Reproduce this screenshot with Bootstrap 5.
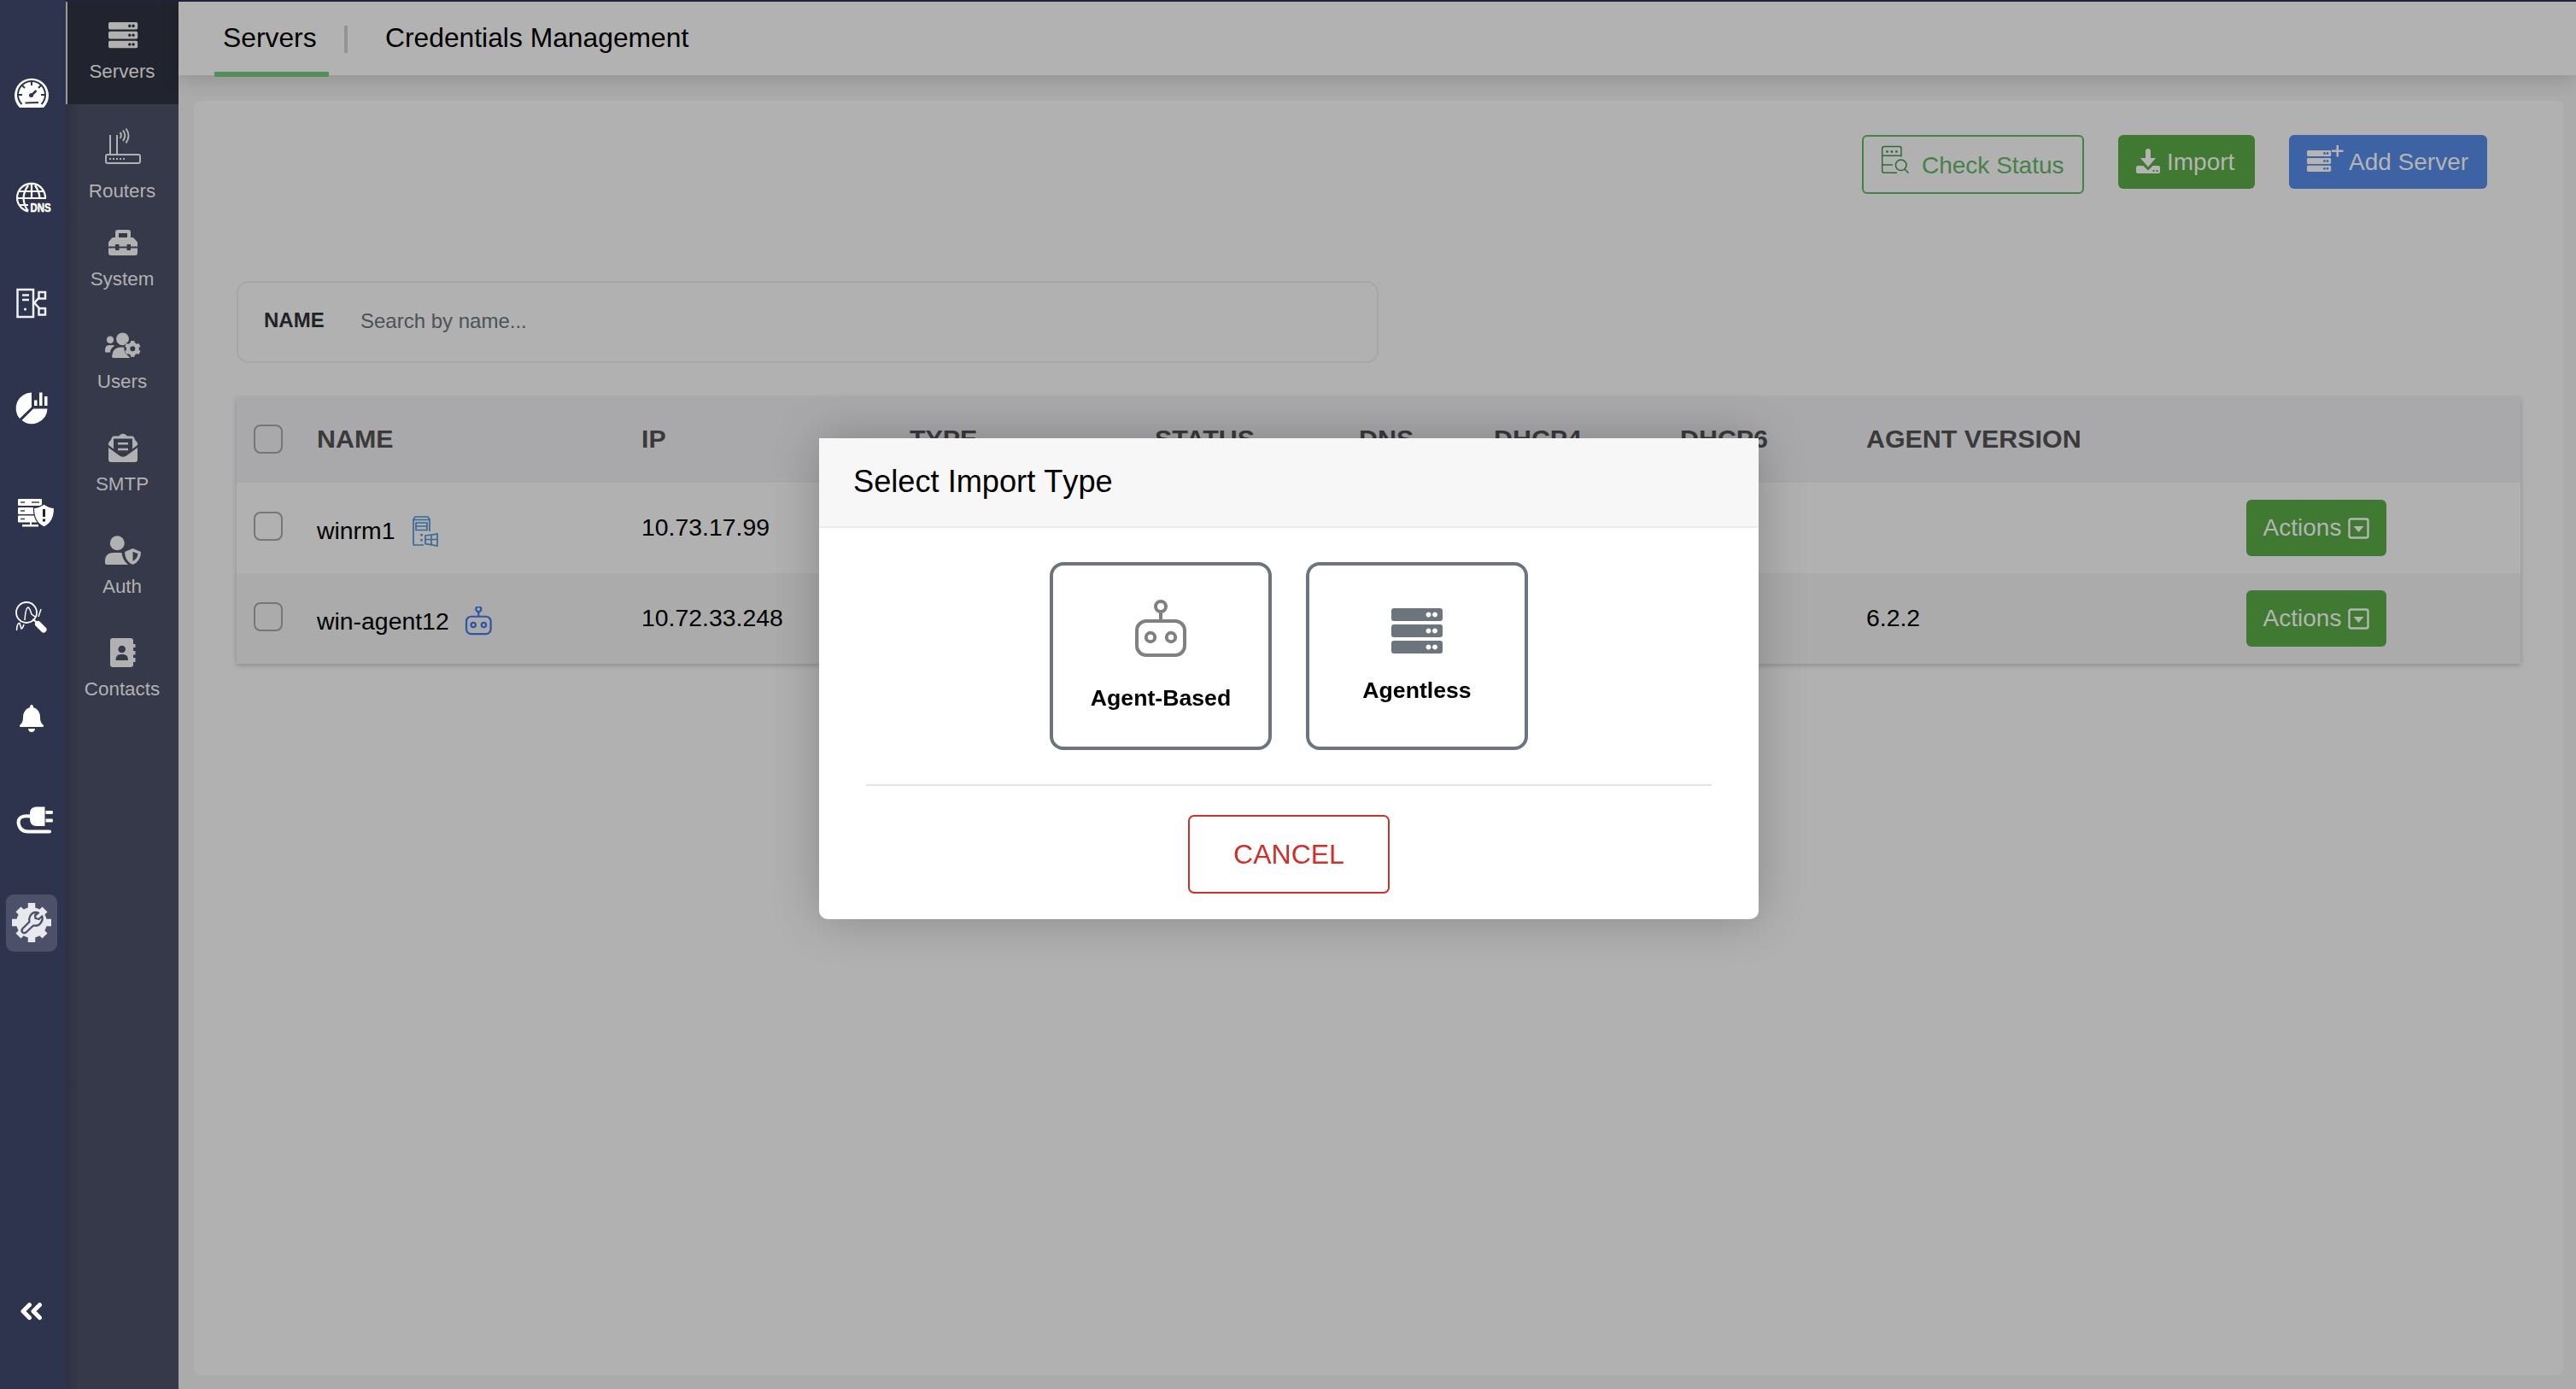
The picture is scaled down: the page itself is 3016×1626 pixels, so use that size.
<!DOCTYPE html>
<html lang="en">
<head>
<meta charset="utf-8">
<title>Servers</title>
<link rel="stylesheet" href="https://cdn.jsdelivr.net/npm/bootstrap@5.3.0/dist/css/bootstrap.min.css">
<script src="https://cdn.jsdelivr.net/npm/bootstrap@5.3.0/dist/js/bootstrap.bundle.min.js"></script>
<style>
html,body{height:100%}
body{font-family:"Liberation Sans",Arial,sans-serif;font-size:28px;line-height:1.2;color:#000;background:#ababab;overflow:hidden}
svg{display:block;flex:none}
.rail{width:77px;background:#2e344e;padding:47px 0 0}
.rail .bottom{margin-top:auto;margin-bottom:71px}
.submenu{width:132px;background:linear-gradient(90deg,#2e303f 0,#36394a 15px);border-top:2px solid #20233a;font-size:22.4px;line-height:26px;color:#b1b1b1}
.entry{height:120px;padding-top:22px;gap:13px;color:inherit;text-decoration:none}
.entry.current{background:#21232e;border-left:2px solid #999;}
.entry.current svg,.entry.current span{margin-left:-2px}
.entry.routers{height:123px;padding-top:26px;gap:17px}
.topbar{height:88px;background:#b2b2b2;border-top:2px solid #20233a;box-shadow:0 4px 22px rgba(0,0,0,.16);font-size:31.8px;padding-left:42px}
.topbar a{color:#000;text-decoration:none;line-height:84px}
.topbar .picked{width:134px;height:88px;border-bottom:6px solid #528f5b;padding-left:10px}
.rule{width:4px;height:32px;background:#949494;margin:28px 44px 0 18px}
.panel{margin:30px 15px 16px 18px;background:#b1b1b1;border-radius:8px;padding:40px 50px 0}
.tools{height:171px;padding-right:39px;gap:40px}
.tools .btn,.acts{font-size:28px;line-height:32px;border-radius:6px;padding:0;color:#b4b4b4;border:0}
.tools .btn{height:63px}
.tools .btn span{padding-top:16px}
.tools .check{width:260px;height:69px;border:2px solid #468147;color:#468147}
.tools .check span{padding-top:18px}
.tools .green{width:160px}
.tools .blue{width:232px}
.green{background:#407a32}
.blue{background:#3d63a5}
.finder{width:1337px;height:96px;border:2px solid #a7a7a7;border-radius:14px;padding-left:30px;padding-bottom:2px;font-size:24px}
.finder b{color:#1f2427;width:113px;margin-top:-2px}
.finder span{color:#4c5256}
.grid-table{margin:40px 0 0;width:2674px;table-layout:fixed;font-size:28.4px;box-shadow:0 2px 6px rgba(0,0,0,.2);--bs-table-bg:#b1b1b1;--bs-table-color:#000}
.grid-table>:not(caption)>*>*{padding:0 0 2px;border:0;vertical-align:middle;height:106px;color:#000}
.grid-table>tbody>tr>td:last-child{padding:0}
.grid-table>thead>tr>th{height:100px;background:#a9a9ab;color:#3a3a3a;font-size:30.4px;padding-bottom:3px}
.grid-table>tbody>tr.alt>td{background:#ababab}
.tick{display:block;width:34px;height:34px;border:2px solid #767676;border-radius:8px;margin-left:20px}
tbody .tick{margin-top:-3px}
.acts{width:164px;height:66px;background:#407a32;gap:8px}
.nm{padding-top:9px}
.nm .bot{margin-left:18px}
.dlg{max-width:1100px;width:1100px;margin:513px 0 0 959px}
.dlg .modal-content{height:563px;border:0;border-radius:0 0 10px 10px;box-shadow:0 0 56px rgba(0,0,0,.23)}
.dlg .modal-header{height:105px;background:#f7f7f7;border-bottom:2px solid #ebebeb;border-radius:0;padding:0 0 2px 40px;font-size:36.2px;font-kerning:none}
.dlg .modal-body{padding:40px 55px 0}
.kinds{gap:40px;height:262px;border-bottom:2px solid #e3e3e3}
.kind{width:260px;height:220px;border:4px solid #6c757d;border-radius:16px;background:#fff;font-weight:700;font-size:26.667px;line-height:30px;color:#000;padding:40px 0 0;gap:33px}
.kind.less{padding-top:50px;gap:28px}
.cancel{width:236px;height:92px;margin-top:34px;border:2px solid #d0302a;border-radius:7px;color:#d0302a;font-size:32px;padding:0}
</style>
</head>
<body>
<svg width="0" height="0" class="position-absolute">
 <defs>
  <g id="robot" fill="none"><circle cx="30" cy="8" r="6"/><path d="M30 14V24"/><rect x="2" y="25" width="56" height="40" rx="11"/><circle cx="18" cy="44" r="5.2"/><circle cx="42" cy="44" r="5.2"/></g>
  <g id="rack"><path fill-rule="evenodd" d="M3 0H57Q60 0 60 3V12Q60 15 57 15H3Q0 15 0 12V3Q0 0 3 0ZM43.500 4.500a3 3 0 1 0 .01 0ZM51 4.500a3 3 0 1 0 .01 0ZM3 19H57Q60 19 60 22V31Q60 34 57 34H3Q0 34 0 31V22Q0 19 3 19ZM43.500 23.500a3 3 0 1 0 .01 0ZM51 23.500a3 3 0 1 0 .01 0ZM3 38H57Q60 38 60 41V50Q60 53 57 53H3Q0 53 0 50V41Q0 38 3 38ZM43.500 42.500a3 3 0 1 0 .01 0ZM51 42.500a3 3 0 1 0 .01 0Z"/></g>
 </defs>
</svg>

<div class="d-flex vh-100">
 <nav class="rail d-flex flex-column">
  <svg width="77" height="123" viewBox="0 47 77 123"><path fill="#fff" d="M23 126A20 20 0 1 1 51 126Z"/><g stroke="#2e344e" fill="none"><path stroke-width="2" d="M25.500 122A16 16 0 1 1 48.500 122"/><path stroke-width="2" d="M37 95.500V100M21.500 111H26M48 111H52.500M26 100L29 103M48 100L45 103M29.500 120.500L45 120"/><path stroke-width="2.500" d="M37 111.500L42.500 106"/></g><circle cx="36.500" cy="111.500" r="2.500" fill="#2e344e"/></svg>
  <svg width="77" height="123" viewBox="0 170 77 123"><g fill="none" stroke="#fff" stroke-width="2.200"><path d="M33 247.500A16.500 16.500 0 1 1 53 232M37 216V232M22 224H52M20.500 232H54M23 240H33M33 217Q28 224 27.500 232Q28 241 33 247M41 217Q46 224 46.500 232"/></g><text x="35.500" y="247.500" font-size="15" font-weight="700" fill="#fff" stroke="#fff" stroke-width=".6" textLength="24" lengthAdjust="spacingAndGlyphs">DNS</text></svg>
  <svg width="77" height="123" viewBox="0 293 77 123"><g fill="none" stroke="#f0f0f4" stroke-width="2.500"><rect x="20.500" y="339" width="18.500" height="32"/><path d="M26 345.500H34M26 351H34M39 356L46 348M39 353L46 361"/><rect x="45.500" y="342" width="7.500" height="7.500"/><rect x="45.500" y="361" width="7.500" height="7.500"/></g><circle cx="29.500" cy="362" r="1.500" fill="#fff"/></svg>
  <svg width="77" height="123" viewBox="0 416 77 123"><g fill="#fff"><path d="M37 459.500V476.500L23 490A18.500 18.500 0 0 1 37 459.500ZM39 478.500H55.500A18.500 18.500 0 0 1 25.500 492ZM40 468.500H43.500V475H40ZM46 459.500H49.500V475H46ZM52 464H55.500V475H52Z"/></g></svg>
  <svg width="77" height="122" viewBox="0 539 77 122"><g fill="#fff"><rect x="21" y="584" width="28" height="8" rx="1"/><rect x="21" y="594" width="28" height="8" rx="1"/><rect x="21" y="603.500" width="28" height="8" rx="1"/><path d="M35 611H37V614H45V616.500H26V614H35Z"/><path stroke="#2e344e" stroke-width="1.200" d="M51.500 590Q57 594 63.500 594.500Q64 611 51.500 617Q39 611 39.500 594.500Q46 594 51.500 590Z"/></g><path stroke="#444" stroke-width="1.500" d="M24 588H29M37 588H46M24 598H29M24 607.500H29"/><path stroke="#222" stroke-width="3" d="M51.500 596V605M51.500 607.500V610.500"/></svg>
  <svg width="77" height="121" viewBox="0 661 77 121"><g fill="none" stroke="#fff"><circle cx="31" cy="717" r="12" stroke-width="1.800"/><path stroke-width="1.500" d="M29 726Q30 711 33 711Q35 712 37 719L41 722M45 722L48 713M19.500 738Q20 729 23 729.500L25 736Q27 735 28 731"/><path stroke-width="2" d="M38.500 724.500L43 729"/><path stroke-width="7" stroke-linecap="round" d="M44.500 730.500L51 737"/></g></svg>
  <svg width="77" height="119" viewBox="0 782 77 119"><path fill="#fff" d="M37 825Q39 825 39 828Q47 830.500 47 840Q47 846 50.500 848.500Q52 851 49.500 851H24.500Q22 851 23.500 848.500Q27 846 27 840Q27 830.500 35 828Q35 825 37 825ZM33 853H41Q40.500 857 37 857Q33.500 857 33 853Z"/></svg>
  <svg width="77" height="119" viewBox="0 901 77 119"><path fill="#fff" d="M42 944.500H52.500V967H42Q35 966 35 959V952Q35 945 42 944.500ZM53.500 949H61Q62 949 62 951T61 953H53.500ZM53.500 958.500H61Q62 958.500 62 960.500T61 962.500H53.500Z"/><path fill="none" stroke="#fff" stroke-width="4" stroke-linecap="round" d="M35 955.500Q21.500 954 21.500 963Q23 973.500 33 973.500H58"/></svg>
  <svg width="77" height="120" viewBox="0 1020 77 120"><rect x="7" y="1047" width="60" height="67" rx="9" fill="#4c5069"/><g fill="#e8e9ed" stroke="#e8e9ed"><circle cx="37" cy="1080" r="17.500"/><path stroke-width="8.500" d="M37 1057V1103M14 1080H60M21.500 1064.500L52.500 1095.500M52.500 1064.500L21.500 1095.500"/></g><path fill="none" stroke="#4c5069" stroke-width="2.300" stroke-linejoin="round" d="M45 1068.500Q38 1066.500 35 1073Q33.500 1076 34.500 1079L26.500 1087Q24.500 1090 26.500 1091.500Q29 1093 31 1091L39 1083.500Q45 1084.500 48 1080Q50.500 1076.500 49.300 1072.500L45.500 1076L41.500 1075L41 1071.500Z"/></svg>
  <svg class="bottom" width="77" height="40" viewBox="0 1515 77 40"><path fill="none" stroke="#fff" stroke-width="5" stroke-linecap="round" stroke-linejoin="round" d="M34.500 1527.500L27 1535L34.500 1542.500M46.500 1527.500L39 1535L46.500 1542.500"/></svg>
 </nav>

 <nav class="submenu d-flex flex-column">
  <a class="entry current d-flex flex-column align-items-center"><svg width="132" height="34" viewBox="77 24 132 34" fill="#b1b1b1"><use href="#rack" transform="translate(127 26) scale(.57)"/></svg><span>Servers</span></a>
  <a class="entry routers d-flex flex-column align-items-center"><svg width="132" height="46" viewBox="77 148 132 46" fill="none" stroke="#b1b1b1"><rect x="124" y="181" width="40" height="10" rx="2" stroke-width="2"/><path stroke-width="2" d="M129 158V181M137 158V181M140.500 155Q143.500 158.500 140.500 162M144 152.500Q148.500 158.500 144 165M147.500 150.500Q153.500 158.500 147.500 167.500"/><path stroke-width="2" stroke-dasharray="2 2" d="M128 186H147"/></svg><span>Routers</span></a>
  <a class="entry d-flex flex-column align-items-center"><svg width="132" height="34" viewBox="77 267 132 34" fill="#b1b1b1"><path fill-rule="evenodd" d="M135 278V272Q135 269 138 269H150Q153 269 153 272V278H156L161 283.500V288.500H153V286H148.500V288.500H139.500V286H135V288.500H127V283.500L131.500 278ZM139 273V278H149V273Z"/><path d="M127 290.500H135V293H139.500V290.500H148.500V293H153V290.500H161V296Q161 299 158 299H130Q127 299 127 296Z"/></svg><span>System</span></a>
  <a class="entry d-flex flex-column align-items-center"><svg width="132" height="34" viewBox="77 387 132 34" fill="#b1b1b1"><circle cx="129" cy="397.700" r="4.200"/><circle cx="143.500" cy="396.800" r="7.400"/><path d="M123 411Q122.500 404 128 404H132.500Q134 404.500 134 405Q129 408 129 412.500H124Q123 412.500 123 411ZM131 417Q132 406.500 141 406.500H145L152 419H133Q131 419 131 417Z"/><g stroke="#36394a" stroke-width="4"><circle cx="155.300" cy="408.300" r="8"/></g><g stroke="#b1b1b1"><circle cx="155.300" cy="408.300" r="5.300" fill="none" stroke-width="4.500"/><path stroke-width="4.500" d="M155.300 399V402.500M155.300 414V417.700M147.200 403.700L150.200 405.400M163.400 403.700L160.400 405.400M147.200 413L150.200 411.300M163.400 413L160.400 411.300"/></g><circle cx="155.300" cy="408.300" r="3" fill="#36394a"/></svg><span>Users</span></a>
  <a class="entry d-flex flex-column align-items-center"><svg width="132" height="34" viewBox="77 507 132 34" fill="#b1b1b1"><path fill-rule="evenodd" d="M139 510.500Q144 505 149 510.500H154Q157.500 510.500 157.500 514L161 518.500V521L155 525.500V513.500H133V525.500L127 521V518.500L130.500 514Q130.500 510.500 134 510.500ZM127 524L140 533.500Q144 536 148 533.500L161 524V538Q161 541 158 541H130Q127 541 127 538ZM138 518H150V520.600H138ZM138 524.700H150V527.300H138Z"/></svg><span>SMTP</span></a>
  <a class="entry d-flex flex-column align-items-center"><svg width="132" height="34" viewBox="77 627 132 34" fill="#b1b1b1"><circle cx="137.300" cy="635.700" r="8.500"/><path d="M123 659Q122 647 133 647H142.500Q143.500 656 150 661H125Q123 661 123 659Z"/><path fill-rule="evenodd" d="M155.500 642L165 646Q165 657 155.500 661Q146 657 146 646ZM155.500 645.800V657Q161 654 161.500 648.200Z"/></svg><span>Auth</span></a>
  <a class="entry d-flex flex-column align-items-center"><svg width="132" height="34" viewBox="77 747 132 34"><path fill="#b1b1b1" d="M132 747H153Q156 747 156 750V754H158.500V758H156V762H158.500V766.500H156V770H158.500V775H156V778Q156 781 153 781H132Q129 781 129 778V750Q129 747 132 747Z"/><g fill="#36394a"><circle cx="142.700" cy="760" r="4.300"/><path d="M135.500 773Q135.500 766 141 766H145Q150 766.500 150 773Z"/></g></svg><span>Contacts</span></a>
 </nav>

 <main class="flex-grow-1 d-flex flex-column">
  <header class="topbar d-flex">
   <a class="picked">Servers</a><div class="rule"></div><a>Credentials Management</a>
  </header>
  <section class="panel flex-grow-1">
   <div class="tools d-flex justify-content-end align-items-start">
    <button class="btn check d-flex"><svg width="68" height="65" viewBox="2182 160 68 65" fill="none" stroke="#2f6b35" stroke-width="1.500"><path d="M2226 183.500V174Q2226 171.500 2224 171.500H2206Q2203.700 171.500 2203.700 174V200Q2203.700 202.300 2206 202.300H2221M2204 182.300H2226M2204 193H2216"/><circle cx="2225.700" cy="193.300" r="6.300"/><path d="M2230 198L2234.500 202.500"/><path stroke-width="2.500" stroke-dasharray="2.500 3" d="M2208.200 177.500H2222"/></svg><span>Check Status</span></button>
    <button class="btn green d-flex"><svg width="57" height="63" viewBox="2480 158 57 63" fill="#b4b4b4"><path fill-rule="evenodd" d="M2512 177Q2512 174 2515 174T2518 177V185H2524L2515 195.500L2506 185H2512ZM2503 194H2509.500L2515 199.500L2520.500 194H2527Q2529 194 2529 196V201Q2529 203 2527 203H2503Q2501 203 2501 201V196Q2501 194 2503 194ZM2520.500 199V201H2522.500V199ZM2524.500 199V201H2526.500V199Z"/></svg><span>Import</span></button>
    <button class="btn blue d-flex"><svg width="70" height="63" viewBox="2680 158 70 63" fill="#b4b4b4"><use href="#rack" transform="translate(2701 176) scale(.47)"/><path d="M2735.500 170H2738V175.500H2743.500V178H2738V183.500H2735.500V178H2730V175.500H2735.500Z"/></svg><span>Add Server</span></button>
   </div>
   <div class="finder d-flex align-items-center"><b>NAME</b><span>Search by name...</span></div>
   <table class="table grid-table">
    <colgroup><col style="width:94px"><col style="width:380px"><col style="width:314px"><col style="width:287px"><col style="width:239px"><col style="width:158px"><col style="width:218px"><col style="width:218px"><col style="width:445px"><col></colgroup>
    <thead><tr><th><i class="tick"></i></th><th>NAME</th><th>IP</th><th>TYPE</th><th>STATUS</th><th>DNS</th><th>DHCP4</th><th>DHCP6</th><th>AGENT VERSION</th><th></th></tr></thead>
    <tbody>
     <tr><td><i class="tick"></i></td><td><div class="d-flex align-items-center nm">winrm1<svg class="ms-3" width="40" height="36" viewBox="477 606 40 36" fill="none" stroke="#3a6a96" stroke-width="1.700"><path d="M494 640H483Q482 640 482 639V610L484 607H499L501 610V624M482 610.500H501M485 614H498V622.500H485ZM485 618H498M496 629L510 627V641L496 638.500ZM496 633.500H510M503 628V640"/><path stroke-width="2.500" stroke-dasharray="2.500 3.500" d="M491.500 627V636"/></svg></div></td><td>10.73.17.99</td><td></td><td></td><td></td><td></td><td></td><td></td><td><button class="btn acts d-flex align-items-center justify-content-center">Actions<svg width="25" height="25" fill="none" stroke="#b4b4b4" stroke-width="2.400"><rect x="1.500" y="1.500" width="22" height="22" rx="2"/><path fill="#b4b4b4" stroke="none" d="M6.500 10H18.500L12.500 17Z"/></svg></button></td></tr>
     <tr class="alt"><td><i class="tick"></i></td><td><div class="d-flex align-items-center nm">win-agent12<svg class="bot" width="34" height="36" stroke="#2f57a5" stroke-width="4.400"><use href="#robot" transform="translate(1 -1) scale(.51)"/></svg></div></td><td>10.72.33.248</td><td></td><td></td><td></td><td></td><td></td><td>6.2.2</td><td><button class="btn acts d-flex align-items-center justify-content-center">Actions<svg width="25" height="25" fill="none" stroke="#b4b4b4" stroke-width="2.400"><rect x="1.500" y="1.500" width="22" height="22" rx="2"/><path fill="#b4b4b4" stroke="none" d="M6.500 10H18.500L12.500 17Z"/></svg></button></td></tr>
    </tbody>
   </table>
  </section>
 </main>
</div>

<div class="modal d-block">
 <div class="modal-dialog dlg">
  <div class="modal-content">
   <div class="modal-header d-flex align-items-center">Select Import Type</div>
   <div class="modal-body">
    <div class="kinds d-flex justify-content-center">
     <button class="kind d-flex flex-column align-items-center"><svg width="60" height="67" stroke="#808080" stroke-width="4"><use href="#robot"/></svg>Agent-Based</button>
     <button class="kind less d-flex flex-column align-items-center"><svg width="60" height="53" fill="#6c757d"><use href="#rack"/></svg>Agentless</button>
    </div>
    <button class="btn cancel d-block mx-auto">CANCEL</button>
   </div>
  </div>
 </div>
</div>
</body>
</html>
